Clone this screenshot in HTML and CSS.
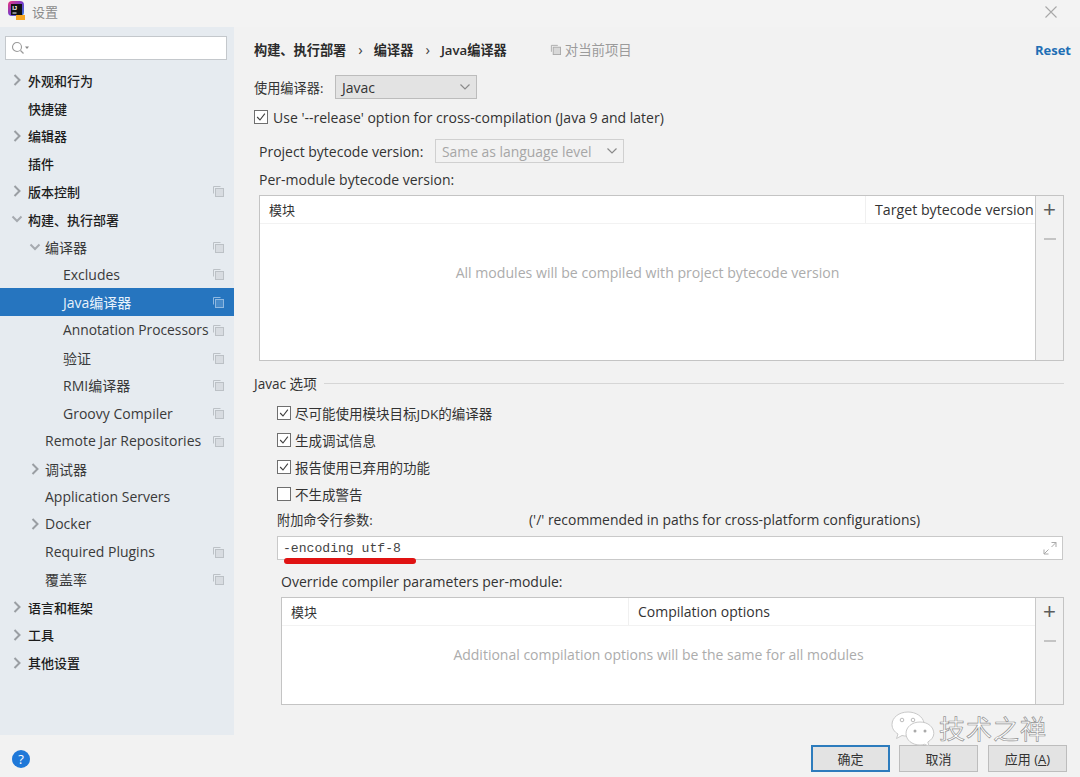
FILE: index.html
```html
<!DOCTYPE html>
<html lang="zh">
<head>
<meta charset="utf-8">
<title>设置</title>
<link rel="stylesheet" href="styles.css">
</head>
<body>
<svg class="defs" width="0" height="0" aria-hidden="true">
  <symbol id="copy" viewBox="0 0 12 12">
    <path d="M1.5 8.5V1.5H8.5" fill="none" stroke="currentColor" stroke-width="1"/>
    <rect x="3.5" y="3.5" width="8" height="8" fill="currentColor" fill-opacity=".35" stroke="currentColor" stroke-width="1"/>
  </symbol>
  <symbol id="right" viewBox="0 0 10 14"><path d="M2.5 2L7.5 7L2.5 12" fill="none" stroke="currentColor" stroke-width="2"/></symbol>
  <symbol id="down" viewBox="0 0 12 10"><path d="M1.5 2.5L6 7L10.500 2.500" fill="none" stroke="currentColor" stroke-width="2"/></symbol>
  <symbol id="caret" viewBox="0 0 12 8"><path d="M1.500 1.500L6 6L10.500 1.500" fill="none" stroke="currentColor" stroke-width="1.200"/></symbol>
  <symbol id="tick" viewBox="0 0 14 14"><path d="M2.500 7L5.800 10.500L11.500 3" fill="none" stroke="currentColor" stroke-width="1.300"/></symbol>
</svg>

<div class="window">
  <header class="titlebar">
    <svg class="logo" viewBox="0 0 18 20" width="18" height="20">
      <defs>
        <linearGradient id="lg" x1="0" y1="0" x2="1" y2="1">
          <stop offset="0" stop-color="#f0357a"/><stop offset=".5" stop-color="#7a3bc8"/><stop offset="1" stop-color="#2a7fe0"/>
        </linearGradient>
      </defs>
      <rect x="0" y="0" width="16" height="15" rx="4" fill="url(#lg)"/>
      <rect x="3" y="3" width="11" height="11" fill="#111"/>
      <text x="4.200" y="9" class="logo-ij">IJ</text>
      <rect x="4.500" y="11.500" width="4" height="1" fill="#fff"/>
      <rect x="8" y="14" width="9" height="5" fill="#f5a623"/>
    </svg>
    <span class="title">设置</span>
    <svg class="close" viewBox="0 0 14 14" width="14" height="14"><path d="M1.500 1.500L12.500 12.500M12.500 1.500L1.500 12.500" stroke="#a8a8a8" stroke-width="1.100" fill="none"/></svg>
  </header>

  <div class="body">
    <aside class="sidebar">
      <div class="search">
        <svg viewBox="0 0 20 14" width="20" height="14"><circle cx="6" cy="6" r="4.500" fill="none" stroke="#9a9a9a" stroke-width="1.100"/><path d="M9.500 9.500L12.500 12.500" stroke="#9a9a9a" stroke-width="1.200"/><path d="M14 5.500h4l-2 2.500z" fill="#8a8a8a"/></svg>
      </div>
      <nav class="tree">
        <div class="row l0 strong"><svg class="arrow"><use href="#right"/></svg><span class="label">外观和行为</span></div>
        <div class="row l0 strong"><span class="arrow"></span><span class="label">快捷键</span></div>
        <div class="row l0 strong"><svg class="arrow"><use href="#right"/></svg><span class="label">编辑器</span></div>
        <div class="row l0 strong"><span class="arrow"></span><span class="label">插件</span></div>
        <div class="row l0 strong"><svg class="arrow"><use href="#right"/></svg><span class="label">版本控制</span><svg class="copy"><use href="#copy"/></svg></div>
        <div class="row l0 strong"><svg class="arrow wide"><use href="#down"/></svg><span class="label">构建、执行部署</span></div>
        <div class="row l1"><svg class="arrow wide"><use href="#down"/></svg><span class="label">编译器</span><svg class="copy"><use href="#copy"/></svg></div>
        <div class="row l2"><span class="label">Excludes</span><svg class="copy"><use href="#copy"/></svg></div>
        <div class="row l2 selected"><span class="label">Java编译器</span><svg class="copy"><use href="#copy"/></svg></div>
        <div class="row l2"><span class="label anno">Annotation Processors</span><svg class="copy"><use href="#copy"/></svg></div>
        <div class="row l2"><span class="label">验证</span><svg class="copy"><use href="#copy"/></svg></div>
        <div class="row l2"><span class="label">RMI编译器</span><svg class="copy"><use href="#copy"/></svg></div>
        <div class="row l2"><span class="label">Groovy Compiler</span><svg class="copy"><use href="#copy"/></svg></div>
        <div class="row l1"><span class="arrow"></span><span class="label">Remote Jar Repositories</span><svg class="copy"><use href="#copy"/></svg></div>
        <div class="row l1"><svg class="arrow"><use href="#right"/></svg><span class="label">调试器</span></div>
        <div class="row l1"><span class="arrow"></span><span class="label">Application Servers</span></div>
        <div class="row l1"><svg class="arrow"><use href="#right"/></svg><span class="label">Docker</span></div>
        <div class="row l1"><span class="arrow"></span><span class="label">Required Plugins</span><svg class="copy"><use href="#copy"/></svg></div>
        <div class="row l1"><span class="arrow"></span><span class="label">覆盖率</span><svg class="copy"><use href="#copy"/></svg></div>
        <div class="row l0 strong"><svg class="arrow"><use href="#right"/></svg><span class="label">语言和框架</span></div>
        <div class="row l0 strong"><svg class="arrow"><use href="#right"/></svg><span class="label">工具</span></div>
        <div class="row l0 strong"><svg class="arrow"><use href="#right"/></svg><span class="label">其他设置</span></div>
      </nav>
    </aside>

    <main class="content">
      <div class="crumbs">
        <b>构建、执行部署</b><i class="sep">›</i><b>编译器</b><i class="sep">›</i><b>Java编译器</b>
        <span class="scope"><svg class="copy-s"><use href="#copy"/></svg>对当前项目</span>
        <a class="reset">Reset</a>
      </div>

      <div class="line compiler">
        <span>使用编译器:</span>
        <div class="select s-javac"><span>Javac</span><svg class="caret"><use href="#caret"/></svg></div>
      </div>

      <label class="check release"><span class="box on"><svg><use href="#tick"/></svg></span>Use '--release' option for cross-compilation (Java 9 and later)</label>

      <div class="line bytecode">
        <span>Project bytecode version:</span>
        <div class="select s-byte"><span>Same as language level</span><svg class="caret"><use href="#caret"/></svg></div>
      </div>
      <div class="permodule">Per-module bytecode version:</div>

      <section class="table t1">
        <div class="grid">
          <div class="thead"><span class="th first">模块</span><span class="th second">Target bytecode version</span></div>
          <div class="empty">All modules will be compiled with project bytecode version</div>
        </div>
        <div class="tools"><span class="plus">+</span><span class="minus"></span></div>
      </section>

      <div class="group"><span>Javac 选项</span><hr></div>

      <div class="checks">
        <label class="check"><span class="box on"><svg><use href="#tick"/></svg></span>尽可能使用模块目标JDK的编译器</label>
        <label class="check"><span class="box on"><svg><use href="#tick"/></svg></span>生成调试信息</label>
        <label class="check"><span class="box on"><svg><use href="#tick"/></svg></span>报告使用已弃用的功能</label>
        <label class="check"><span class="box"></span>不生成警告</label>
      </div>

      <div class="params"><span class="p-label">附加命令行参数:</span><span>('/' recommended in paths for cross-platform configurations)</span></div>
      <div class="cmd">
        <span class="mono">-encoding utf-8</span>
        <span class="redline"></span>
        <svg class="expand" viewBox="0 0 14 14" width="14" height="14"><path d="M8.500 1.500H13V6M13 1.500L8.500 6M1 8.500V13H5.500M1 13L5.500 8.500" fill="none" stroke="#a9a9a9" stroke-width="1"/></svg>
      </div>

      <div class="override">Override compiler parameters per-module:</div>
      <section class="table t2">
        <div class="grid">
          <div class="thead"><span class="th first">模块</span><span class="th second">Compilation options</span></div>
          <div class="empty">Additional compilation options will be the same for all modules</div>
        </div>
        <div class="tools"><span class="plus">+</span><span class="minus"></span></div>
      </section>
    </main>
  </div>

  <footer class="footer">
    <span class="help">?</span>
    <div class="buttons">
      <button class="btn primary">确定</button>
      <button class="btn">取消</button>
      <button class="btn">应用 (<u>A</u>)</button>
    </div>
  </footer>

  <div class="watermark">
    <svg viewBox="0 0 46 36" width="46" height="36">
      <path d="M18 2C9 2 2 7.500 2 14.500c0 4 2.300 7.300 6 9.500l-1.500 4.500 5.500-3c1.500.4 3 .6 5 .6C26 26 34 20 34 13 33 6.500 26 2 18 2z" fill="#fff" stroke="#c9c9c9" stroke-width="1"/>
      <circle cx="12" cy="10" r="1.800" fill="none" stroke="#bbb"/><circle cx="23" cy="10" r="1.800" fill="none" stroke="#bbb"/>
      <path d="M30 12c-8 0-14 5-14 11.500S22 35 30 35c1.600 0 3-.2 4.500-.7l4.500 1.700-1.200-4c3.500-2 6-5 6-8.500C43.800 17 38 12 30 12z" fill="#fff" stroke="#c9c9c9" stroke-width="1"/>
      <circle cx="25" cy="21" r="1.500" fill="#aaa"/><circle cx="35" cy="21" r="1.500" fill="#aaa"/>
    </svg>
    <span class="wm-text">技术之禅</span>
  </div>
</div>
</body>
</html>
```

FILE: styles.css
```css
* { box-sizing: border-box; }
html, body { margin: 0; padding: 0; }
body {
  width: 1080px;
  height: 777px;
  overflow: hidden;
  background: #f2f2f2;
  color: #333;
  font-family: "Open Sans", "Noto Sans CJK SC", sans-serif;
  font-size: 14px;
}
.defs { position: absolute; }
.window { position: relative; width: 1080px; height: 777px; display: flex; flex-direction: column; }

.titlebar { height: 27px; flex: none; display: flex; align-items: center; padding: 0 22px 5px 8px; background: #f3f3f3; }
.logo { flex: none; }
.logo-ij { font: bold 6px "Liberation Sans", sans-serif; fill: #fff; }
.title { margin-left: 6px; color: #8b8b8b; font-size: 13px; }
.close { margin-left: auto; margin-top: 2px; }

.body { flex: 1; display: flex; min-height: 0; }

.sidebar { width: 234px; flex: none; background: #e6ebf0; padding: 9px 0 0; }
.search { margin: 0 7px 0 5px; height: 24px; background: #fff; border: 1px solid #c4c8cc; display: flex; align-items: center; padding-left: 5px; }
.tree { margin-top: 6.6px; }
.row { height: 27.72px; display: flex; align-items: center; color: #3a3a3a; font-size: 14px; white-space: nowrap; }
.row.strong { color: #1c1c1c; font-weight: 500; font-size: 13px; }
.l0 { padding-left: 12px; }
.l1 { padding-left: 30px; }
.l2 { padding-left: 63px; }
.arrow { width: 10px; height: 14px; margin-right: 6px; flex: none; color: #9a9ea3; }
.l1 .arrow { margin-right: 5px; }
.arrow.wide, .l1 .arrow.wide { width: 12px; margin-right: 4px; margin-left: -1px; height: 10px; color: #a6aab0; }
.row.l0 .arrow.wide + .label { margin-left: 1px; }
.anno { font-size: 13.8px; }
.copy { width: 12px; height: 12px; margin-left: auto; margin-right: 10px; color: #bcc1c6; flex: none; }
.selected { background: #2675bf; color: #e8f2fb; }
.selected .copy { color: #8fb8e0; }

.content { flex: 1; min-width: 0; padding: 0 16px 0 20px; position: relative; }
.crumbs { height: 24px; margin-top: 10px; display: flex; align-items: center; font-size: 13.2px; color: #2b2b2b; }
.crumbs b { font-weight: 600; }
.sep { font-style: normal; margin: 0 11px 0 12px; color: #444; font-size: 15px; line-height: 1; }
.scope { margin-left: 43px; color: #9b9b9b; display: flex; align-items: center; gap: 4px; font-size: 13.4px; }
.copy-s { width: 11px; height: 11px; color: #a9a9a9; }
.reset { margin-left: auto; margin-right: -7px; margin-top: 1px; color: #1f6fb5; font-weight: 700; font-size: 13px; }

.line { display: flex; align-items: center; }
.select { display: flex; align-items: center; justify-content: space-between; height: 24px; border: 1px solid #bcbcbc; }
.caret { width: 12px; height: 8px; color: #8a8a8a; }
.compiler { margin-top: 13px; height: 26px; font-size: 13.2px; }
.compiler > span { width: 81px; }
.s-javac { width: 142px; background: #e3e3e3; padding: 0 5px 0 6px; font-size: 14px; }
.release { margin-top: 4px; height: 26px; margin-left: -1px; }
.bytecode { margin-top: 8px; height: 26px; padding-left: 5px; }
.bytecode > span { width: 176px; }
.s-byte { width: 189px; background: #f2f2f2; border-color: #d0d0d0; padding: 0 5px 0 6px; color: #a6a6a6; font-size: 13.9px; }
.permodule { height: 24px; margin-top: 6px; padding-left: 5px; line-height: 20px; }

.check { display: flex; align-items: center; color: #333; }
.box { width: 14px; height: 14px; border: 1px solid #6f6f6f; background: #fff; margin-right: 4px; flex: none; display: block; }
.box svg { display: block; width: 12px; height: 12px; color: #3f3f3f; }
.release .box { margin-right: 5px; margin-left: 1px; }

.table { display: flex; border: 1px solid #c4c4c4; background: #fff; }
.grid { flex: 1; min-width: 0; display: flex; flex-direction: column; }
.thead { height: 28px; flex: none; display: flex; align-items: center; border-bottom: 1px solid #f2f2f2; }
.th { height: 100%; display: flex; align-items: center; white-space: nowrap; overflow: hidden; }
.empty { flex: 1; display: flex; align-items: center; justify-content: center; color: #acacac; }
.tools { width: 28px; flex: none; border-left: 1px solid #c9c9c9; background: #f2f2f2; display: flex; flex-direction: column; align-items: center; }
.plus { height: 28px; line-height: 27px; font-size: 22px; color: #5c5c5c; font-family: "Liberation Sans", sans-serif; }
.minus { width: 12px; height: 2px; background: #c4c4c4; margin-top: 14px; }

.t1 { height: 166px; margin-top: 1px; margin-left: 5px; width: 805px; }
.t1 .first { width: 606px; padding-left: 9px; border-right: 1px solid #f0f0f0; font-size: 13px; }
.t1 .second { flex: 1; padding-left: 9px; font-size: 14.2px; }
.t1 .empty { padding-bottom: 40px; font-size: 14.1px; }
.t2 .empty { padding-bottom: 21px; }

.group { display: flex; align-items: center; height: 22px; margin-top: 11px; gap: 7px; font-size: 13.6px; }
.group hr { flex: 1; border: 0; height: 1px; background: #d6d6d6; margin: 0; }

.checks { margin-top: 5px; padding-left: 23px; display: flex; flex-direction: column; font-size: 13.5px; }
.checks .check { height: 27px; }

.params { display: flex; align-items: center; height: 22px; margin-top: 1px; padding-left: 23px; font-size: 13.9px; white-space: nowrap; }
.p-label { width: 252px; font-size: 13.2px; }
.cmd { position: relative; height: 24px; width: 786px; margin: 6px 0 0 23px; background: #fff; border: 1px solid #c9c9c9; display: flex; align-items: center; padding-left: 5px; }
.mono { font-family: "Liberation Mono", monospace; font-size: 13.1px; color: #444; }
.redline { position: absolute; left: 6px; top: 21px; width: 132px; height: 6px; border-radius: 3px; background: #e01212; }
.expand { margin-left: auto; margin-right: 5px; }

.override { height: 24px; margin-top: 10px; padding-left: 27px; line-height: 24px; }
.t2 { height: 108px; margin-top: 3px; margin-left: 27px; width: 783px; }
.t2 .first { width: 347px; padding-left: 9px; border-right: 1px solid #f0f0f0; font-size: 13px; }
.t2 .second { flex: 1; padding-left: 9px; }

.footer { height: 42px; flex: none; display: flex; align-items: center; padding: 0 13px 0 12px; background: #f2f2f2; }
.help { width: 18px; height: 18px; border-radius: 50%; background: #1f78d8; color: #fff; font-size: 13px; text-align: center; line-height: 18px; margin-top: 6px; }
.buttons { margin-left: auto; display: flex; gap: 10px; margin-top: 5px; }
.btn { width: 79px; height: 27px; background: #e3e3e3; border: 1px solid #bdbdbd; color: #333; font: 13px "Open Sans", "Noto Sans CJK SC", sans-serif; padding: 0; }
.btn.primary { border: 2px solid #2d7cbd; margin-right: -1px; }

.watermark { position: absolute; left: 890px; top: 709px; display: flex; align-items: center; gap: 3px; }
.wm-text { font-size: 26px; color: #fff; letter-spacing: 1px; -webkit-text-stroke: .7px #949494; line-height: 36px; padding-top: 2px; }
```
